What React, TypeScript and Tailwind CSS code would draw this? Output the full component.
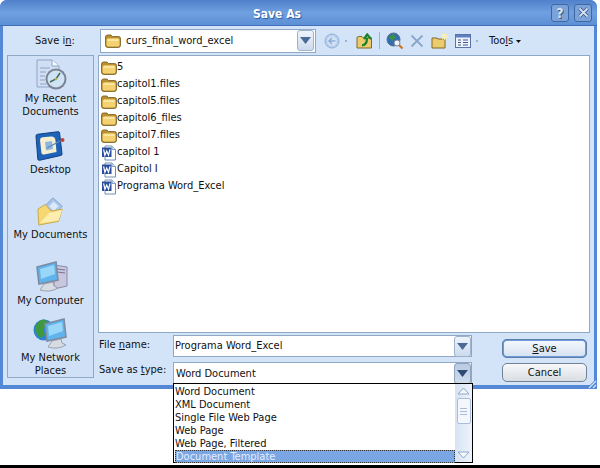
import type { ReactNode } from "react";

const FILES = [
  { name: "5", type: "folder" },
  { name: "capitol1.files", type: "folder" },
  { name: "capitol5.files", type: "folder" },
  { name: "capitol6_files", type: "folder" },
  { name: "capitol7.files", type: "folder" },
  { name: "capitol 1", type: "doc" },
  { name: "Capitol I", type: "doc" },
  { name: "Programa Word_Excel", type: "doc" },
];

const TYPES = ["Word Document", "XML Document", "Single File Web Page", "Web Page", "Web Page, Filtered"];

function Folder() {
  return (
    <svg width="16" height="14" viewBox="0 0 16 14" className="shrink-0">
      <path d="M0.5 3 Q0.5 1 2.5 1 H6 L7.5 2.5 H13.5 Q15.5 2.5 15.5 4.5 V11 Q15.5 13.5 13 13.5 H3 Q0.5 13.5 0.5 11 Z" fill="#b98f2f" stroke="#7f682c" strokeWidth="0.9" />
      <path d="M1.6 6 Q1.6 4.2 3.4 4.2 H12.8 Q14.5 4.2 14.5 6 V10.8 Q14.5 12.6 12.8 12.6 H3.4 Q1.6 12.6 1.6 10.8 Z" fill="#f4d272" />
      <path d="M2.5 5.2 H13.5 V7 H2.5 Z" fill="#fbe8a6" />
    </svg>
  );
}

function WordDoc() {
  return (
    <svg width="16" height="16" viewBox="0 0 16 16" className="shrink-0">
      <path d="M4 1 H11 L14.5 4.5 V15 H4 Z" fill="#fff" stroke="#6f8fb8" strokeWidth="1" />
      <path d="M11 1 V4.5 H14.5" fill="#dbe6f5" stroke="#6f8fb8" strokeWidth="0.8" />
      <rect x="1" y="2.5" width="9.5" height="9.5" fill="#2b4f9e" />
      <path d="M2.6 4.4 L3.9 10.2 L5.7 6 L7.5 10.2 L9 4.4" fill="none" stroke="#fff" strokeWidth="1.2" />
    </svg>
  );
}

function Recent() {
  return (
    <svg width="32" height="32" viewBox="0 0 32 32">
      <path d="M2 1 H17 L24 7 V28 H2 Z" fill="#d2dff2" stroke="#8ea4c4" />
      <path d="M17 1 V7 H24" fill="#f7fafe" stroke="#8ea4c4" />
      <path d="M5 9 H15 M5 13 H11 M5 17 H10 M5 21 H10 M5 25 H11" stroke="#a3b8d8" strokeWidth="1.4" />
      <circle cx="21" cy="20" r="10.5" fill="#7c8494" />
      <circle cx="21" cy="20" r="8.5" fill="#cfe3f4" />
      <path d="M25 14 L21 20 L15 23" fill="none" stroke="#3f6b5e" strokeWidth="1.5" />
      <circle cx="21" cy="20" r="1.2" fill="#c7b24a" />
    </svg>
  );
}

function Desktop() {
  return (
    <svg width="32" height="30" viewBox="0 0 32 30">
      <path d="M2 5 Q2 3.5 3.5 3.3 L24 0.7 Q25.4 0.6 25.6 2 L28 23 Q28.1 24.2 27 24.4 L5.5 29.3 Q4 29.5 3.8 28 Z" fill="#1f63b8" stroke="#123f85" />
      <path d="M6 9 Q6 6.5 8.5 6.3 L17 5.5 Q21 5.3 21.5 9.5 L22.5 21 L10 23.5 Q7.5 24 7.4 21.5 Z" fill="#f6efcf" />
      <path d="M11 11 L18 10 L19 18 L12 19.5 Z" fill="#8db7e2" />
      <path d="M13 17 L27 9.5" stroke="#5f88ad" strokeWidth="1.4" />
      <circle cx="28.5" cy="9" r="2" fill="#c2402c" />
    </svg>
  );
}

function MyDocs() {
  return (
    <svg width="30" height="32" viewBox="0 0 32 32">
      <path d="M9 11 L18 2 L28 11 L19 20 Z" fill="#a9c8ee" stroke="#7f9cc4" />
      <path d="M14 11 L19 6 L24 11 L19 16 Z" fill="#dbe9f9" />
      <path d="M2 14 L10 9 L16 16 L28 14 L24 27 L3 31 Z" fill="#f6d873" stroke="#c6a548" />
      <path d="M4 29 L14 18 L28 15 L24 26 Z" fill="#fdeeb0" />
    </svg>
  );
}

function Monitor() {
  return (
    <g>
      <path d="M3 6 L22 1 L24 19 L5 23 Z" fill="#5fb4ee" stroke="#7d8ba3" strokeWidth="1.6" />
      <path d="M6 8 L20 4 L21 13 L7 18 Z" fill="#9ad6f8" />
      <path d="M10 23 L19 21 L20 25 L24 27 Q16 32 6 29 Z" fill="#d8dce2" stroke="#8a93a1" strokeWidth="0.8" />
    </g>
  );
}

function MyComputer() {
  return (
    <svg width="34" height="32" viewBox="0 0 34 32">
      <path d="M20 4 L33 6 V25 L20 28 Z" fill="#c9c7dd" stroke="#8b8aa8" />
      <path d="M23 8 L31 9 M23 11 L31 12" stroke="#77768e" strokeWidth="1.2" />
      <Monitor />
    </svg>
  );
}

function Network() {
  return (
    <svg width="34" height="34" viewBox="0 0 34 34">
      <circle cx="11" cy="13" r="10.5" fill="#2f84cf" />
      <path d="M3 8 Q8 1 13 3 L15 8 L10 12 L12 18 L7 21 Q1 15 3 8 Z" fill="#3f9a3f" />
      <g transform="translate(9 1)">
        <Monitor />
      </g>
    </svg>
  );
}

function Place({ icon, lines, className }: { icon: ReactNode; lines: string[]; className: string }) {
  return (
    <div className={`flex flex-col items-center ${className}`}>
      <div className="flex h-[34px] items-center">{icon}</div>
      <div className="text-center leading-[13px]">
        {lines.map((l) => (
          <div key={l}>{l}</div>
        ))}
      </div>
    </div>
  );
}

function ComboButton({ pressed }: { pressed?: boolean }) {
  return (
    <div className={`flex h-[21px] w-[17px] shrink-0 items-center justify-center rounded-[3px] border ${pressed ? "border-[#8fa3bd] bg-gradient-to-b from-[#b9cbe2] to-[#cfdcee]" : "border-[#9db2cc] bg-gradient-to-b from-[#eef4fb] to-[#cddbee]"}`}>
      <svg width="11" height="7" viewBox="0 0 11 7">
        <path d="M0 0 H11 L5.5 7 Z" fill={pressed ? "#2f4a75" : "#4c6a96"} />
      </svg>
    </div>
  );
}

export default function App() {
  return (
    <div className="relative flex h-[468px] w-[600px] flex-col justify-between overflow-hidden bg-white font-['DejaVu_Sans',sans-serif] text-[11px] text-[#111] [font-stretch:condensed]">
      <div className="flex h-[389px] w-[597px] flex-col rounded-t-[7px] bg-[#5487d4] px-[3px] pb-[4px]">
        {/* Title bar */}
        <div className="-mx-[3px] flex h-[26px] shrink-0 items-center rounded-t-[7px] border-b border-[#3f70b8] bg-gradient-to-b from-[#4f80ca] via-[#70a0e0] to-[#5d8fd6] pl-[253px] pr-[5px]">
          <span className="mt-[3px] text-[12px] font-bold text-white [text-shadow:1px_1px_1px_#2d5a9e]">Save As</span>
          <div className="ml-auto flex gap-[5px]">
            <div className="flex h-[18px] w-[18px] items-center justify-center rounded-[3px] border border-[#3f689f] bg-[#7ba3da] text-[14px] font-bold leading-none text-[#d5e2f3] [text-shadow:1px_1px_0_#39577f]">?</div>
            <div className="flex h-[18px] w-[18px] items-center justify-center rounded-[3px] border border-[#3f689f] bg-[#7ba3da]">
              <svg width="11" height="11" viewBox="0 0 11 11">
                <path d="M1.5 1.5 L9.5 9.5 M9.5 1.5 L1.5 9.5" stroke="#39577f" strokeWidth="3.4" />
                <path d="M1.5 1.5 L9.5 9.5 M9.5 1.5 L1.5 9.5" stroke="#d5e2f3" strokeWidth="1.8" />
              </svg>
            </div>
          </div>
        </div>

        <div className="flex min-h-0 flex-1 flex-col bg-[#d3e3f8] pl-[4px] pr-[4px]">
          {/* Toolbar */}
          <div className="flex h-[29px] shrink-0 items-center">
            <span className="ml-[28px] mt-[2px] w-[65px]">
              Save i<span className="underline">n</span>:
            </span>
            <div className="flex h-[24px] w-[216px] items-center border border-[#8fa8c6] bg-white pl-[4px] pr-[1px]">
              <Folder />
              <span className="ml-[5px] mt-[2px] flex-1">curs_final_word_excel</span>
              <ComboButton />
            </div>
            <div className="ml-[8px] flex items-center">
              <svg width="16" height="16" viewBox="0 0 16 16">
                <circle cx="8" cy="8" r="7" fill="#bcd1ee" stroke="#8fb0d8" />
                <circle cx="8" cy="8" r="4.6" fill="#d5e3f6" />
                <path d="M11.5 8 H5.5 M8 5 L5 8 L8 11" fill="none" stroke="#8fb0d8" strokeWidth="1.6" />
              </svg>
              <span className="ml-[5px] h-[2px] w-[2px] bg-[#9db2cc]" />
              <svg className="ml-[9px]" width="18" height="16" viewBox="0 0 18 16">
                <path d="M1 5 Q1 3.5 2.5 3.5 H6 L7.5 5 H15.5 V15 H1 Z" fill="#eccb6c" stroke="#80682b" />
                <path d="M6 12.5 Q11 12 11 5 M8 6 L11.2 1.5 L15 6" fill="none" stroke="#16802a" strokeWidth="2.2" />
              </svg>
              <span className="ml-[5px] h-[17px] w-px bg-[#9db2cc]" />
              <svg className="ml-[6px]" width="18" height="18" viewBox="0 0 18 18">
                <circle cx="7.5" cy="7.5" r="6.5" fill="#2f6fb2" stroke="#5a6f8b" />
                <path d="M3 5 L7 2 L10 5 L6 9 Z" fill="#3f9140" />
                <circle cx="11" cy="11" r="3" fill="#eef4fb" stroke="#7b8798" />
                <path d="M13 13 L16.5 16.5" stroke="#c7762a" strokeWidth="2.2" />
              </svg>
              <svg className="ml-[6px]" width="14" height="14" viewBox="0 0 14 14">
                <path d="M1.5 1.5 L12.5 12.5 M12.5 1.5 L1.5 12.5" stroke="#8ba6c9" strokeWidth="1.8" />
              </svg>
              <svg className="ml-[7px]" width="17" height="16" viewBox="0 0 17 16">
                <path d="M1 5 H6 L7 6 H14 V15 H1 Z" fill="#eccb6c" stroke="#80682b" />
                <path d="M13.5 0.5 V7 M10 3.5 H17 M11 1 L16 6 M16 1 L11 6" stroke="#fbf0b0" strokeWidth="1.1" />
              </svg>
              <svg className="ml-[7px]" width="16" height="14" viewBox="0 0 16 14">
                <rect x="0.5" y="0.5" width="15" height="13" fill="#eef3fb" stroke="#5a72a8" />
                <rect x="1" y="1" width="14" height="2.5" fill="#5f7fc4" />
                <path d="M3 6 H6 M8 6 H13 M3 8.5 H6 M8 8.5 H13 M3 11 H6 M8 11 H13" stroke="#41598f" strokeWidth="1.2" />
              </svg>
              <span className="ml-[5px] h-[2px] w-[2px] bg-[#9db2cc]" />
              <span className="ml-[11px] mt-[2px]">
                Too<span className="underline">l</span>s
              </span>
              <svg className="ml-[3px] mt-[2px]" width="5" height="3" viewBox="0 0 5 3">
                <path d="M0 0 H5 L2.5 3 Z" fill="#111" />
              </svg>
            </div>
          </div>

          <div className="flex min-h-0 flex-1">
            {/* Places bar */}
            <div className="mb-[7px] flex w-[87px] shrink-0 flex-col items-center border border-[#8fa8c6] bg-[#d0e1f7] pt-[2px]">
              <Place icon={<Recent />} lines={["My Recent", "Documents"]} className="h-[72px]" />
              <Place icon={<Desktop />} lines={["Desktop"]} className="h-[66px]" />
              <Place icon={<MyDocs />} lines={["My Documents"]} className="h-[66px]" />
              <Place icon={<MyComputer />} lines={["My Computer"]} className="h-[58px]" />
              <Place icon={<Network />} lines={["My Network", "Places"]} className="" />
            </div>

            <div className="ml-[4px] flex min-w-0 flex-1 flex-col">
              {/* File list */}
              <div className="h-[278px] shrink-0 border border-[#8fa8c6] bg-white pl-[2px] pt-[3px]">
                {FILES.map((f) => (
                  <div key={f.name} className="flex h-[17px] items-center">
                    {f.type === "folder" ? <Folder /> : <WordDoc />}
                    <span>{f.name}</span>
                  </div>
                ))}
              </div>

              {/* File name and type */}
              <div className="flex flex-1">
                <div className="flex flex-col">
                  <div className="mt-[2px] flex items-center">
                    <span className="mb-[2px] ml-px w-[74px]">
                      File <span className="underline">n</span>ame:
                    </span>
                    <div className="flex h-[22px] w-[299px] items-center border border-[#8fa8c6] bg-white pl-[1px]">
                      <span className="mt-px flex-1">Programa Word_Excel</span>
                      <ComboButton />
                    </div>
                  </div>
                  <div className="mt-[5px] flex items-center">
                    <span className="mb-[6px] ml-px w-[74px]">
                      Save as <span className="underline">t</span>ype:
                    </span>
                    <div className="flex h-[22px] w-[299px] items-center border border-[#8fa8c6] bg-white pl-[2px]">
                      <span className="mt-px flex-1">Word Document</span>
                      <ComboButton pressed />
                    </div>
                  </div>
                </div>
                <div className="ml-[30px] flex flex-col gap-[5px] pt-[6px]">
                  <button className="h-[19px] w-[85px] rounded-[5px] border-2 border-[#6c9ae0] bg-gradient-to-b from-[#f3f7fd] to-[#d7e2f0] leading-none outline outline-1 -outline-offset-1 outline-[#5f7ea6]">
                    <span className="underline">S</span>ave
                  </button>
                  <button className="h-[19px] w-[85px] rounded-[5px] border border-[#70819a] bg-gradient-to-b from-[#f7f8fa] to-[#d9dde2] leading-none">Cancel</button>
                </div>
              </div>
            </div>
          </div>
        </div>
      </div>

      {/* Resize grip */}
      <svg className="absolute left-[586px] top-[378px]" width="11" height="11" viewBox="0 0 11 11">
        <path d="M11 0 L0 11 H11 Z" fill="#5487d4" />
        <path d="M10 3 L3 10 M10 7 L7 10" stroke="#d3e3f8" strokeWidth="1.2" />
      </svg>

      {/* Open type list */}
      <div className="absolute left-[173px] top-[383px] flex h-[80px] w-[300px] border border-black bg-white">
        <div className="min-w-0 flex-1 pl-[1px] pt-px">
          {TYPES.map((t) => (
            <div key={t} className="h-[13px] leading-[13px]">{t}</div>
          ))}
          <div className="h-[13px] border border-dotted border-[#333] bg-[#7aa6e3] leading-[11px] text-[#e4eefb]">Document Template</div>
        </div>
        <div className="flex w-[17px] flex-col items-center justify-between bg-gradient-to-r from-[#d7e3f3] to-[#eef3fb] py-[3px]">
          <svg width="13" height="8" viewBox="0 0 13 8">
            <path d="M1 7 L6.5 1 L12 7 Z" fill="#f4f8fd" stroke="#8fa8c6" />
          </svg>
          <div className="-mt-[24px] flex h-[26px] w-[14px] flex-col items-center justify-center gap-[2px] rounded-[2px] border border-[#a9bdd8] bg-[#f3f7fd]">
            <span className="h-px w-[7px] bg-[#a9bdd8]" />
            <span className="h-px w-[7px] bg-[#a9bdd8]" />
            <span className="h-px w-[7px] bg-[#a9bdd8]" />
          </div>
          <svg width="13" height="8" viewBox="0 0 13 8">
            <path d="M1 1 L6.5 7 L12 1 Z" fill="#f4f8fd" stroke="#8fa8c6" />
          </svg>
        </div>
      </div>

      <div className="h-[3px] shrink-0 bg-black" />
    </div>
  );
}
